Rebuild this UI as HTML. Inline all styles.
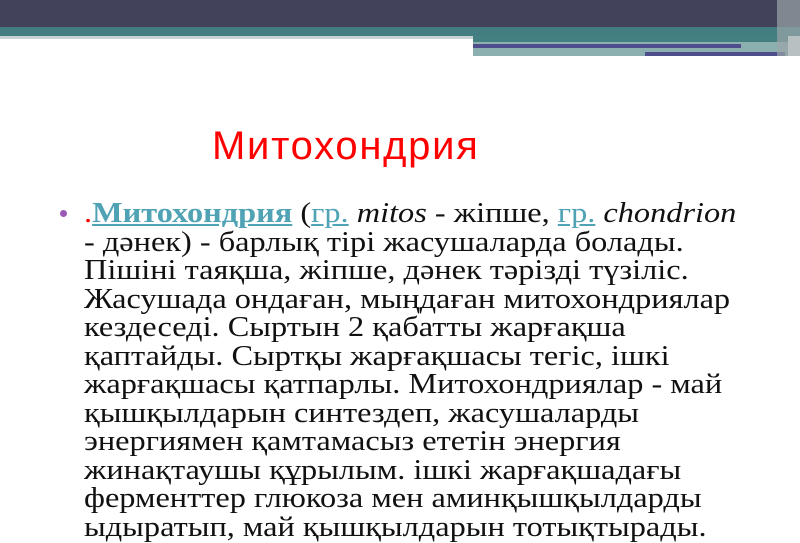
<!DOCTYPE html>
<html><head><meta charset="utf-8"><style>
body{margin:0;width:800px;height:539px;overflow:hidden;background:#fff;position:relative;font-family:"Liberation Serif","DejaVu Serif",serif}
.a{position:absolute}
.t{position:absolute;left:84px;font-size:29px;line-height:28px;color:#111;white-space:nowrap;transform:scaleX(1.115);transform-origin:0 0}
.l{color:#4fa3b4;text-decoration:underline}
</style></head><body>
<div class="a" style="left:0;top:0;width:800px;height:27px;background:#42435a"></div>
<div class="a" style="left:0;top:27px;width:800px;height:9px;background:#427e81"></div>
<div class="a" style="left:0;top:36px;width:473px;height:3px;background:#c9d2d2"></div>
<div class="a" style="left:473px;top:36px;width:315px;height:20px;background:#8cb0b0"></div>
<div class="a" style="left:473px;top:36px;width:315px;height:6px;background:#448081"></div>
<div class="a" style="left:473px;top:44px;width:268px;height:4px;background:#4e4e8c"></div>
<div class="a" style="left:645px;top:52px;width:140px;height:4px;background:#4e4e8c"></div>
<div class="a" style="left:777px;top:0;width:23px;height:56px;background:#9aa5a8;opacity:.7"></div>
<div class="a" style="left:212px;top:124px;font-family:'Liberation Sans',sans-serif;font-size:40px;letter-spacing:1.7px;color:#ff0000">Митохондрия</div>
<div class="a" style="left:60px;top:210px;width:7px;height:7px;border-radius:50%;background:#9b59b6"></div>
<div class="t" style="top:199px"><span style="color:red">.</span><b class="l">Митохондрия</b> (<span class="l">гр.</span> <i>mitos</i> - жіпше, <span class="l">гр.</span> <i>chondrion</i></div>
<div class="t" style="top:227.5px">- дәнек) - барлық тірі жасушаларда болады.</div>
<div class="t" style="top:256px">Пішіні таяқша, жіпше, дәнек тәрізді түзіліс.</div>
<div class="t" style="top:284.5px">Жасушада ондаған, мыңдаған митохондриялар</div>
<div class="t" style="top:313px">кездеседі. Сыртын 2 қабатты жарғақша</div>
<div class="t" style="top:341.5px">қаптайды. Сыртқы жарғақшасы тегіс, ішкі</div>
<div class="t" style="top:370px">жарғақшасы қатпарлы. Митохондриялар - май</div>
<div class="t" style="top:398.5px">қышқылдарын синтездеп, жасушаларды</div>
<div class="t" style="top:427px">энергиямен қамтамасыз ететін энергия</div>
<div class="t" style="top:455.5px">жинақтаушы құрылым. ішкі жарғақшадағы</div>
<div class="t" style="top:484px">ферменттер глюкоза мен аминқышқылдарды</div>
<div class="t" style="top:512.5px">ыдыратып, май қышқылдарын тотықтырады.</div>
</body></html>
